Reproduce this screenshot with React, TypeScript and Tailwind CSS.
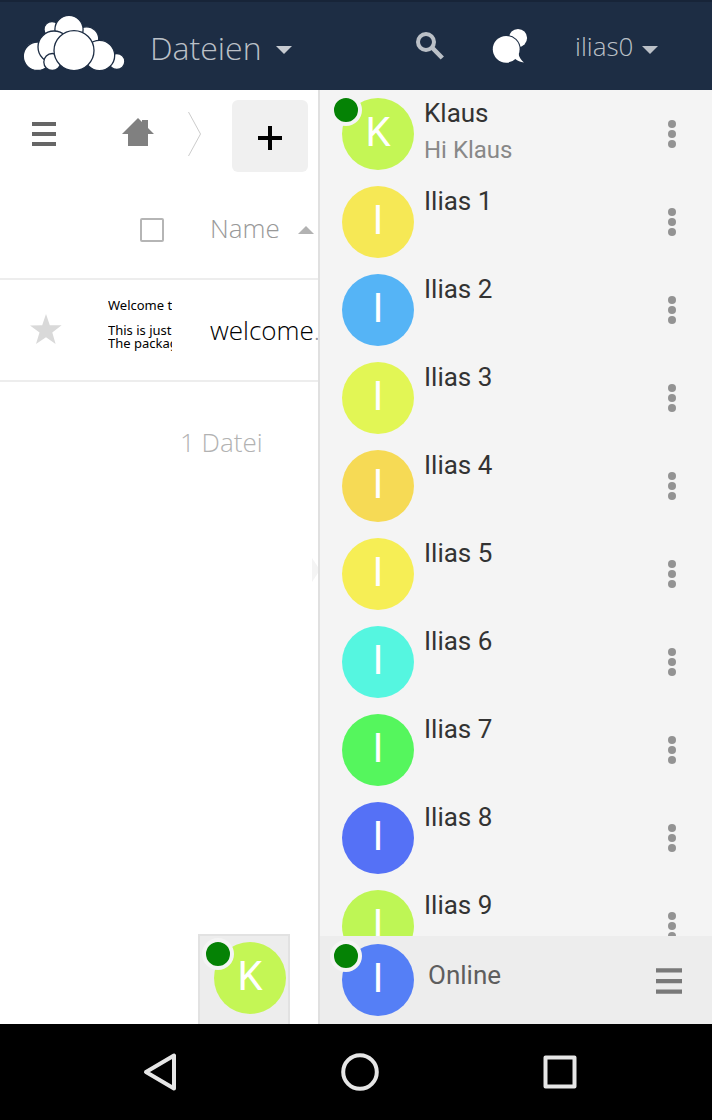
import React from "react";

const contacts = [
  { name: "Klaus", letter: "K", color: "bg-[#c4f655]", message: "Hi Klaus", online: true },
  { name: "Ilias 1", letter: "I", color: "bg-[#f6e855]" },
  { name: "Ilias 2", letter: "I", color: "bg-[#55b4f6]" },
  { name: "Ilias 3", letter: "I", color: "bg-[#e2f655]" },
  { name: "Ilias 4", letter: "I", color: "bg-[#f6da55]" },
  { name: "Ilias 5", letter: "I", color: "bg-[#f6ee55]" },
  { name: "Ilias 6", letter: "I", color: "bg-[#55f6e0]" },
  { name: "Ilias 7", letter: "I", color: "bg-[#55f65d]" },
  { name: "Ilias 8", letter: "I", color: "bg-[#5571f6]" },
  { name: "Ilias 9", letter: "I", color: "bg-[#bef655]" },
];

function Avatar({ letter, color, online }: { letter: string; color: string; online?: boolean }) {
  return (
    <div className="relative h-[72px] w-[72px] shrink-0">
      <div
        className={`h-[72px] w-[72px] rounded-full pt-1 text-center font-['Roboto',sans-serif] text-[40px] font-normal leading-[62px] text-white ${color}`}
      >
        {letter}
      </div>
      {online && (
        <span className="absolute -left-3 -top-1 h-8 w-8 rounded-full border-4 border-[#f4f4f4] bg-[#058205]" />
      )}
    </div>
  );
}

function Caret({ className, up }: { className: string; up?: boolean }) {
  return (
    <svg className={className} width="16" height="8" viewBox="0 0 16 8" fill="currentColor">
      <path d={up ? "M0 8L8 0L16 8Z" : "M0 0H16L8 8Z"} />
    </svg>
  );
}

function CloudLogo() {
  return (
    <svg width="104" height="60" viewBox="22 12 104 60" fill="#fff" stroke="#1d2d44" strokeWidth="1.3">
      <circle cx="52" cy="29.5" r="8" />
      <circle cx="86.5" cy="39" r="12.2" />
      <circle cx="37.5" cy="56.3" r="14.2" />
      <circle cx="116.8" cy="61.5" r="8" />
      <circle cx="69" cy="29.5" r="14.1" />
      <circle cx="54" cy="47" r="16" />
      <circle cx="52.3" cy="62" r="8.5" />
      <circle cx="99.5" cy="55.5" r="15.2" />
      <circle cx="74" cy="50.6" r="20" />
    </svg>
  );
}

function Header() {
  return (
    <header className="flex h-[90px] shrink-0 border-t-2 border-[#172438] bg-[#1d2d44] text-[#bbc0c7]">
      <div className="ml-[22px] mt-[10px]">
        <CloudLogo />
      </div>
      <div className="ml-6 w-[126px] pt-[25px] text-[32px] leading-[42px]">Dateien</div>
      <Caret className="mt-[44px] text-[#c7cbd1]" />
      <svg className="ml-[122px] mt-[28px]" width="32" height="32" viewBox="414 30 32 32" fill="none" stroke="currentColor">
        <circle cx="426" cy="42" r="8" strokeWidth="4" />
        <path d="M432 47.5L442.3 58" strokeWidth="4.6" />
      </svg>
      <svg className="ml-11 mt-[26px]" width="40" height="36" viewBox="490 28 40 36" fill="#fff">
        <circle cx="518" cy="38" r="9.1" />
        <circle cx="506.2" cy="49.3" r="14.4" fill="#1d2d44" />
        <circle cx="506.2" cy="49.3" r="13.4" />
        <path d="M518.6 53.5C518.8 57 521 60 523.9 62.4C520.5 62 517.5 60.6 515.3 59C513 57 514 53 518.6 53.5Z" />
      </svg>
      <div className="ml-[45px] w-[67px] pt-[27px] text-[26px] leading-[34px]">ilias0</div>
      <Caret className="mt-[44px]" />
    </header>
  );
}

function Files() {
  return (
    <main className="flex w-[318px] shrink-0 flex-col overflow-hidden bg-white">
      <div className="flex h-[98px] shrink-0">
        <svg className="ml-8 mt-8" width="24" height="24" viewBox="0 0 24 24" fill="#666">
          <path d="M0 0H24V4H0ZM0 10H24V14H0ZM0 20H24V24H0Z" />
        </svg>
        <svg className="ml-[66px] mt-7" width="32" height="28" viewBox="0 0 32 28" fill="#808080">
          <path d="M0 16L16 0L20 4V2H26V10L32 16H26V28H6V16Z" />
        </svg>
        <svg className="ml-8 mt-5" width="18" height="48" viewBox="0 0 18 48" fill="none" stroke="#ccc" strokeWidth="1">
          <path d="M2.5 2L14.5 24L2.5 46" />
        </svg>
        <button className="ml-7 mt-[10px] flex h-[72px] w-[76px] shrink-0 items-center justify-center rounded-md bg-[#f0f0f0] pt-1">
          <svg width="24" height="24" viewBox="0 0 24 24" fill="#000">
            <path d="M10 0H14V10H24V14H14V24H10V14H0V10H10Z" />
          </svg>
        </button>
      </div>
      <div className="flex h-[92px] shrink-0 border-b-2 border-[#ededed]">
        <span className="ml-[140px] mt-[30px] h-6 w-6 shrink-0 rounded-[2px] border-2 border-[#b5b5b5]" />
        <div className="ml-[46px] w-[88px] shrink-0 pt-[23px] text-[26px] leading-[34px] text-[#999]">Name</div>
        <Caret up className="mt-[38px] shrink-0 text-[#b2b2b2]" />
      </div>
      <div className="flex h-[102px] shrink-0 border-b-2 border-[#ededed]">
        <svg className="ml-[30px] mt-[34px] shrink-0" width="32" height="31" viewBox="0 0 32 31" fill="#d9d9d9">
          <path d="M16 0L19.8 11.2L31.6 11.3L22.3 18.5L25.6 30L16 23.3L6 30L9.5 18.5L0 11.5L12.2 11.2Z" />
        </svg>
        <div className="ml-[46px] mt-[18px] h-16 w-16 shrink-0 overflow-hidden whitespace-pre font-['Noto_Sans',sans-serif] text-[13px] font-normal leading-[12.5px] text-black">
          <p className="mt-[1px]">Welcome to</p>
          <p className="mt-[12.5px]">This is just an</p>
          <p>The package</p>
        </div>
        <div className="ml-[38px] shrink-0 pt-[33px] text-[26px] leading-[34px] text-black">
          welcome<span className="text-[#999]">.txt</span>
        </div>
      </div>
      <div className="ml-[180px] mt-[43px] text-[26px] leading-[34px] text-[#b2b2b2]">1 Datei</div>
      <svg className="ml-[312px] mt-[99px]" width="8" height="24" viewBox="0 0 8 24" fill="#f4f4f4">
        <path d="M0 0L8 12L0 24Z" />
      </svg>
      <div className="ml-[198px] mt-auto h-[90px] w-[92px] border-2 border-b-0 border-[#e2e2e2] bg-[#ededed] pl-[14px] pt-[6px]">
        <Avatar letter="K" color="bg-[#c4f655]" online />
      </div>
    </main>
  );
}

function Chat() {
  return (
    <aside className="flex min-w-0 flex-1 flex-col border-l-2 border-[#e0e0e0] bg-[#f4f4f4] font-['Roboto',sans-serif] font-normal">
      <ul className="h-[846px] overflow-hidden">
        {contacts.map((c) => (
          <li key={c.name} className="flex h-[88px] pl-[22px] pt-2">
            <Avatar letter={c.letter} color={c.color} online={c.online} />
            <div className="ml-[10px] w-[244px]">
              <p className="text-[26px] leading-[30px] text-[#333]">{c.name}</p>
              {c.message && <p className="mt-[8px] text-[24px] leading-[28px] text-[#888]">{c.message}</p>}
            </div>
            <svg className="mt-[22px]" width="8" height="28" viewBox="0 0 8 28" fill="#939393">
              <circle cx="4" cy="4" r="4" />
              <circle cx="4" cy="14" r="4" />
              <circle cx="4" cy="24" r="4" />
            </svg>
          </li>
        ))}
      </ul>
      <div className="flex h-[88px] shrink-0 bg-[#ededed] pl-[22px] pt-2">
        <Avatar letter="I" color="bg-[#557ff6]" online />
        <div className="ml-[14px] w-[228px] pt-4 text-[26px] leading-[30px] text-[#5e5e5e]">Online</div>
        <svg className="mt-6" width="26" height="26" viewBox="0 0 26 26" fill="#797979">
          <path d="M0 0.3H26V4.5H0ZM0 11H26V15.2H0ZM0 21.5H26V25.7H0Z" />
        </svg>
      </div>
    </aside>
  );
}

export default function App() {
  return (
    <div className="flex h-[1120px] w-[712px] flex-col overflow-hidden bg-white font-['Open_Sans',sans-serif] font-light">
      <Header />
      <div className="flex h-[934px] shrink-0">
        <Files />
        <Chat />
      </div>
      <nav className="flex h-24 shrink-0 items-center gap-40 bg-black pl-[140px]">
        <svg width="40" height="40" viewBox="0 0 40 40" fill="none" stroke="#e6e6e6" strokeWidth="4" strokeLinejoin="round">
          <path d="M6 20L34 3.5V36.5Z" />
        </svg>
        <svg width="40" height="40" viewBox="0 0 40 40" fill="none" stroke="#e6e6e6" strokeWidth="4">
          <circle cx="20" cy="20" r="16.8" />
        </svg>
        <svg width="40" height="40" viewBox="0 0 40 40" fill="none" stroke="#e6e6e6" strokeWidth="4" strokeLinejoin="round">
          <path d="M5.5 5.5H34.5V34.5H5.5Z" />
        </svg>
      </nav>
    </div>
  );
}
